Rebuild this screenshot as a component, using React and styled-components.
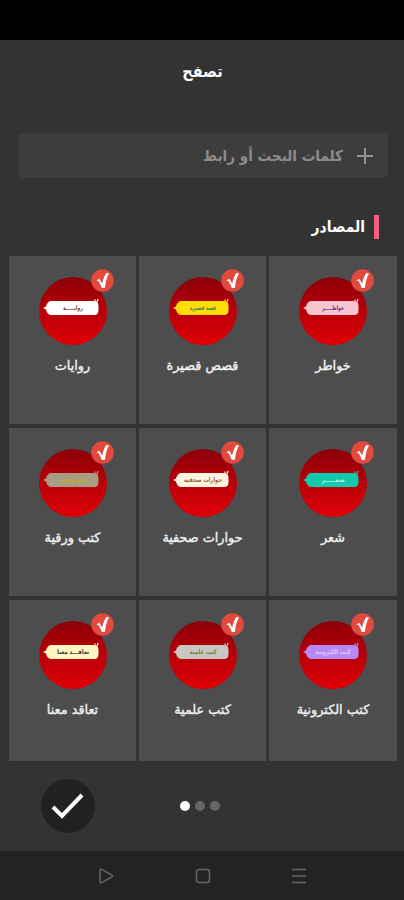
import React, { useState } from 'react';
import styled, { createGlobalStyle } from 'styled-components';

const GlobalStyle = createGlobalStyle`
  * {
    box-sizing: border-box;
  }
  body {
    margin: 0;
    background: #333333;
    font-family: "DejaVu Sans", sans-serif;
  }
`;

const Screen = styled.div`
  display: flex;
  flex-direction: column;
  width: 404px;
  height: 900px;
  overflow: hidden;
  background: #333333;
  color: #ffffff;
`;

const StatusBar = styled.div`
  height: 40px;
  flex-shrink: 0;
  background: #000000;
`;

const Title = styled.h1`
  margin: 0;
  height: 93px;
  padding: 17px 0 0 1px;
  font-family: "DejaVu Sans Condensed", "DejaVu Sans", sans-serif;
  font-size: 16px;
  line-height: 30px;
  font-weight: bold;
  text-align: center;
`;

const SearchBox = styled.div`
  display: flex;
  align-items: center;
  gap: 14px;
  height: 45px;
  margin: 0 16px 1px 18px;
  padding: 0 15px;
  border-radius: 5px;
  background: #3d3d3d;
  color: #8c8c8c;
  font-family: "DejaVu Sans Condensed", "DejaVu Sans", sans-serif;
  font-size: 15.1px;
  font-weight: bold;
  line-height: 30px;
`;

const SectionTitle = styled.h2`
  display: flex;
  align-items: center;
  gap: 9px;
  height: 24px;
  margin: 36px 25px 17px 0;
  font-family: "DejaVu Sans Condensed", "DejaVu Sans", sans-serif;
  font-size: 15.5px;
  font-weight: bold;
  line-height: 24px;
`;

const Marker = styled.span`
  width: 5px;
  height: 24px;
  background: #f5607e;
`;

const Grid = styled.div`
  display: grid;
  grid-template-columns: 128px 127px 127px;
  grid-template-rows: 168px 168px 161px;
  gap: 4px 3px;
  margin: 0 7px 0 9px;
`;

const Card = styled.div`
  display: flex;
  flex-direction: column;
  align-items: center;
  padding-top: 21px;
  background: #4d4d4d;
`;

const Cover = styled.div`
  position: relative;
  width: 68px;
  height: 68px;
  border-radius: 50%;
  background: linear-gradient(#8c0008, #b8000a 50%, #dc0006 95%);
`;

const Ribbon = styled.svg`
  display: block;
  width: 68px;
  height: 68px;
`;

const Badge = styled.svg`
  position: absolute;
  top: -8px;
  left: 52px;
  width: 23px;
  height: 23px;
`;

const CardLabel = styled.span`
  margin-top: 9px;
  color: #f2f2f2;
  font-size: 12.8px;
  line-height: 24px;
  white-space: nowrap;
  -webkit-text-stroke: 0.35px #f2f2f2;
`;

const Footer = styled.div`
  display: flex;
  align-items: center;
  gap: 85px;
  height: 90px;
  padding: 0 0 0 41px;
  direction: ltr;
`;

const ConfirmButton = styled.button`
  width: 54px;
  height: 54px;
  padding: 0;
  border: none;
  border-radius: 50%;
  background: #212121;
`;

const Dots = styled.div`
  display: flex;
  gap: 5px;
`;

const Dot = styled.span`
  width: 10px;
  height: 10px;
  border-radius: 50%;
  background: ${props => props.$active ? '#ffffff' : '#666666'};
`;

const NavBar = styled.div`
  display: flex;
  align-items: center;
  justify-content: space-between;
  flex: 1;
  padding: 0 97px 0 97px;
  direction: ltr;
  background: #232323;
`;

const sources = [
    { id: 1, name: 'خواطر', ribbon: 'خواطـــــر', color: '#fbc5cf', ink: '#5a3a9a', width: 22 },
    { id: 2, name: 'قصص قصيرة', ribbon: 'قصة قصيرة', color: '#ffdc0a', ink: '#4a8a3a', width: 26 },
    { id: 3, name: 'روايات', ribbon: 'روايـــــة', color: '#ffffff', ink: '#7a4a4a', width: 20 },
    { id: 4, name: 'شعر', ribbon: 'شعـــــر', color: '#12c9ae', ink: '#b5f3e4', width: 23 },
    { id: 5, name: 'حوارات صحفية', ribbon: 'حوارات صحفية', color: '#fff3e2', ink: '#a5672a', width: 38 },
    { id: 6, name: 'كتب ورقية', ribbon: 'كتب ورقية', color: '#a89c82', ink: '#c2b41c', width: 26 },
    { id: 7, name: 'كتب الكترونية', ribbon: 'كتب الكترونية', color: '#b988f7', ink: '#e0c8ff', width: 35 },
    { id: 8, name: 'كتب علمية', ribbon: 'كتب علمية', color: '#c9c6c4', ink: '#6f8a3a', width: 27 },
    { id: 9, name: 'تعاقد معنا', ribbon: 'تعاقـــد معنا', color: '#fff6c4', ink: '#4a3a35', width: 32 },
]

const Source = ({ source }) => {
    return <Card>
        <Cover>
            <Ribbon viewBox="0 0 68 68">
                <path
                    d="M4 31l3-1.500q1-4.500 4.500-5.500h42c1 0 1.500.5 3 .5 2 0 3 1.500 3 5v4c0 3-2 4.500-4 4.500H11.500q-3.500-1-4.500-5.500z"
                    fill={source.color}
                />
                <path d="M56 22.500v2.500M59 22l-1 3" stroke={source.color} strokeWidth="1.3" />
                <text
                    x="34"
                    y="33"
                    textAnchor="middle"
                    fontSize="6.5"
                    fontWeight="bold"
                    fill={source.ink}
                    textLength={source.width}
                    lengthAdjust="spacingAndGlyphs"
                >{source.ribbon}</text>
            </Ribbon>
            <Badge viewBox="0 0 23 23">
                <circle cx="11.5" cy="11.5" r="11.3" fill="#e24a3d" />
                <path d="M5.300 11.600l3-1.900 2.900 4.800c.8-4 2-7.400 4-10.500l2.800.4c-2.400 4.200-3.600 8.800-4 14.400l-3.200.3c-.9-3-2-5.200-3.500-7.200z" fill="#ffffff" />
            </Badge>
        </Cover>
        <CardLabel>{source.name}</CardLabel>
    </Card>
}

const App = () => {

    const [page, setPage] = useState(0)

    return <Screen dir="rtl">
        <GlobalStyle />
        <StatusBar />
        <Title>تصفح</Title>
        <SearchBox>
            <svg width="16" height="16" viewBox="0 0 16 16" stroke="#929292" strokeWidth="2">
                <path d="M8 0v16M0 8h16" />
            </svg>
            <span>كلمات البحث أو رابط</span>
        </SearchBox>
        <SectionTitle>
            <Marker />
            <span>المصادر</span>
        </SectionTitle>
        <Grid>
            {
                sources.map(source => <Source key={source.id} source={source} />)
            }
        </Grid>
        <Footer>
            <ConfirmButton>
                <svg width="54" height="54" viewBox="0 0 54 54" fill="none" stroke="#ffffff" strokeWidth="4">
                    <path d="M12 28l9 9 20-21" />
                </svg>
            </ConfirmButton>
            <Dots>
                {
                    [0, 1, 2].map(i => <Dot key={i} $active={i === page} onClick={() => setPage(i)} />)
                }
            </Dots>
        </Footer>
        <NavBar>
            <svg width="18" height="18" viewBox="0 0 18 18" fill="none" stroke="#666666" strokeWidth="1.5">
                <path d="M3 3.2v11.6c0 1 .8 1.3 1.5.9l10.5-5.9c.7-.4.7-1.2 0-1.6L4.5 2.3C3.8 1.9 3 2.2 3 3.2z" />
            </svg>
            <svg width="16" height="16" viewBox="0 0 16 16" fill="none" stroke="#666666" strokeWidth="1.5">
                <rect x="1.5" y="1.5" width="13" height="13" rx="2.5" />
            </svg>
            <svg width="16" height="16" viewBox="0 0 16 16" fill="none" stroke="#666666" strokeWidth="1.5">
                <path d="M1 1.5h14M1 8h14M1 14.5h14" />
            </svg>
        </NavBar>
    </Screen>
}

export default App;
